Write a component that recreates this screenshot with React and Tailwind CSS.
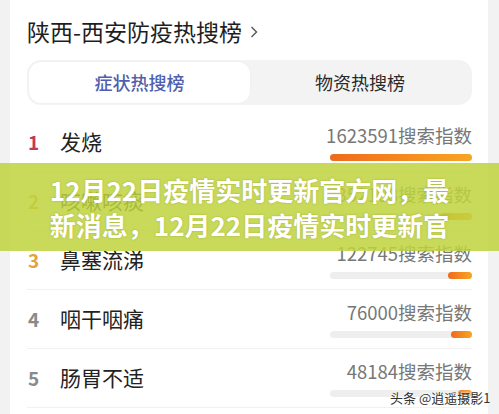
import React from "react";

const rows = [
  { n: "1", name: "发烧", val: "1623591", fill: 142, nc: "text-[#c23a5c]" },
  { n: "2", name: "咳嗽咳痰", val: "352108", fill: 32, nc: "text-[#d9a13a]" },
  { n: "3", name: "鼻塞流涕", val: "122745", fill: 24, nc: "text-[#e3a23c]" },
  { n: "4", name: "咽干咽痛", val: "76000", fill: 21, nc: "text-[#8a8a8a]" },
  { n: "5", name: "肠胃不适", val: "48184", fill: 14, nc: "text-[#8a8a8a]" },
];

export default function App() {
  return (
    <div
      className="relative w-[499px] h-[414px] overflow-hidden bg-[#f2f2f2]"
      style={{ fontFamily: '"Noto Sans CJK SC", "Noto Sans", sans-serif' }}
    >
      <div className="mx-[10px] w-[478px] h-[414px] bg-white pl-[17px] pr-[16px] pt-[14px]">
        <div className="flex items-center h-[34px] gap-[7px]">
          <span className="text-[23px] leading-[34px] text-[#1e1e1e]">陕西-西安防疫热搜榜</span>
          <svg width="10" height="14" viewBox="0 0 10 14" className="mt-[1px]">
            <path d="M2.5 2 L7.5 7 L2.5 12" fill="none" stroke="#555" strokeWidth="1.4" />
          </svg>
        </div>
        <div className="mt-[12px] h-[45px] rounded-[14px] bg-[#f3f3f3] p-[2px] flex">
          <div className="w-[221px] h-full rounded-[12px] bg-white flex items-center justify-center text-[18px] font-medium text-[#4f5fae] shadow-[0_0_2px_rgba(0,0,0,0.04)]">
            症状热搜榜
          </div>
          <div className="flex-1 h-full flex items-center justify-center text-[18px] text-[#2a2a2a]">
            物资热搜榜
          </div>
        </div>
        <div className="mt-[8px]">
          {rows.map((r) => (
            <div
              key={r.n}
              className="h-[59px] flex items-center border-b border-[#f1f1f1]"
            >
              <span className={`w-[33px] pl-[1px] text-[19px] font-bold ${r.nc}`}>{r.n}</span>
              <span className="text-[21px] text-[#222]">{r.name}</span>
              <div className="ml-auto w-[160px] flex flex-col items-end">
                <span className="text-[18.5px] leading-[22px] text-[#777] whitespace-nowrap">
                  {r.val}搜索指数
                </span>
                <div className="mt-[8px] w-[142px] h-[7px] rounded-full bg-[#eeeeee] flex justify-end">
                  <div
                    className="h-full rounded-full bg-gradient-to-r from-[#ef6a1c] to-[#f7a524]"
                    style={{ width: r.fill }}
                  />
                </div>
              </div>
            </div>
          ))}
        </div>
      </div>

      <div className="absolute left-0 right-0 top-[163px] h-[88px] bg-[rgba(192,212,62,0.85)] flex flex-col items-center justify-center">
        <div
          className="text-[26px] leading-[35px] font-bold text-white whitespace-nowrap"
          style={{ textShadow: "0 0 2px rgba(120,130,20,0.5)" }}
        >
          12月22日疫情实时更新官方网，最
        </div>
        <div
          className="text-[26px] leading-[35px] font-bold text-white whitespace-nowrap"
          style={{ textShadow: "0 0 2px rgba(120,130,20,0.5)" }}
        >
          新消息，12月22日疫情实时更新官
        </div>
      </div>

      <div
        className="absolute left-[390px] top-[389px] text-[13px] leading-[18px] text-[#333] whitespace-nowrap"
        style={{ textShadow: "0 0 3px #fff, 0 0 3px #fff" }}
      >
        头条 @逍遥摄影1
      </div>
    </div>
  );
}
